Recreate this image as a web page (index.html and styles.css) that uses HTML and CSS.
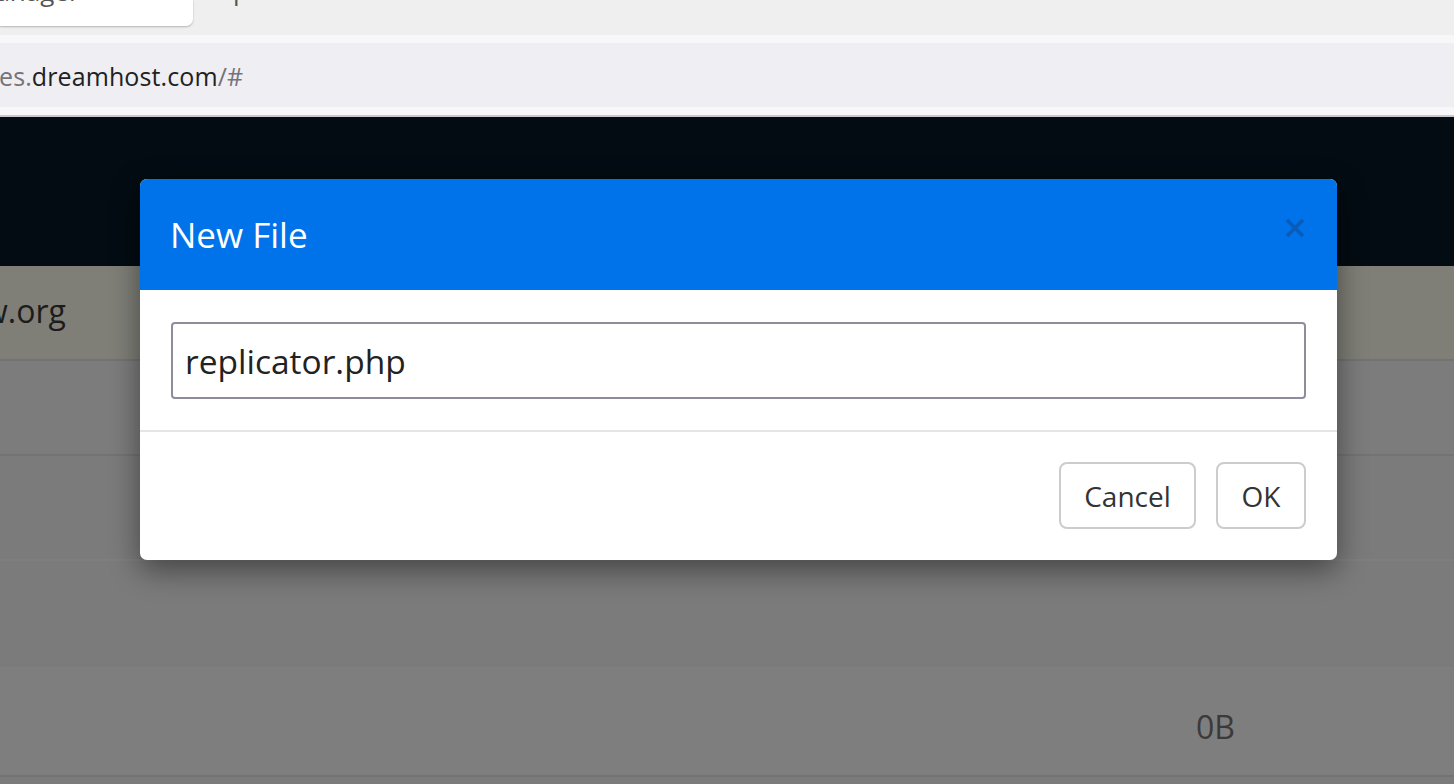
FILE: index.html
```html
<!DOCTYPE html>
<html>
<head>
<meta charset="utf-8">
<link rel="stylesheet" href="styles.css">
</head>
<body>
<div class="chrome">
  <div class="tabstrip">
    <div class="tab"><span class="tab-title">Manager</span></div>
    <span class="tab-next">p</span>
  </div>
  <div class="strip"></div>
  <div class="addressbar"><span class="url"><span class="dim">es.</span>dreamhost.com<span class="dim">/#</span></span></div>
  <div class="strip strip-bottom"></div>
</div>
<div class="app">
  <div class="topbar"></div>
  <div class="rows">
    <div class="row row-domain"><span class="domain">w.org</span></div>
    <div class="row row-a"></div>
    <div class="row row-b"></div>
    <div class="row row-c"></div>
    <div class="row row-d"><span class="size">0B</span></div>
    <div class="row row-e"></div>
  </div>
  <div class="modal">
    <div class="modal-header">
      <h4 class="modal-title">New File</h4>
      <button class="close" aria-label="Close">
        <svg width="20" height="20" viewBox="0 0 20 20"><path d="M2 2 L18 18 M18 2 L2 18" stroke="#0a5cb8" stroke-width="3.6" fill="none"/></svg>
      </button>
    </div>
    <div class="modal-body">
      <input class="filename" type="text" value="replicator.php">
    </div>
    <div class="modal-footer">
      <button class="btn btn-cancel">Cancel</button>
      <button class="btn btn-ok">OK</button>
    </div>
  </div>
</div>
</body>
</html>
```

FILE: styles.css
```css
* { box-sizing: border-box; }
html, body { margin: 0; padding: 0; overflow: hidden; }
body {
  width: 1454px;
  height: 784px;
  font-family: "Open Sans", "Liberation Sans", sans-serif;
  background: #7b7b7b;
}

.tabstrip {
  height: 35px;
  background: #efefef;
  display: flex;
  align-items: flex-start;
  overflow: hidden;
  position: relative;
}
.tab {
  width: 193px;
  height: 26px;
  background: #fff;
  border-bottom-right-radius: 7px;
  box-shadow: 0 1px 2px rgba(0,0,0,0.25);
  overflow: hidden;
  position: relative;
}
.tab-title {
  display: block;
  margin-top: -24px;
  margin-left: -28px;
  font-size: 26px;
  line-height: 30px;
  color: #555;
}
.tab-next {
  margin-left: 40px;
  margin-top: -24px;
  font-size: 26px;
  line-height: 28px;
  color: #555;
}
.strip {
  height: 8px;
  background: #f7f7f9;
}
.strip-bottom {
  border-bottom: 2px solid #c9c9c9;
  height: 10px;
}
.addressbar {
  height: 64px;
  background: #efeef3;
  display: flex;
  align-items: center;
}
.url {
  font-size: 25px;
  color: #202124;
  margin-left: -1px;
  margin-top: 2px;
  letter-spacing: 0.1px;
}
.url .dim { color: #74737a; }

.app {
  position: relative;
  height: 667px;
  overflow: hidden;
}
.topbar {
  height: 149px;
  background: #030c12;
}
.rows { display: flex; flex-direction: column; }
.row {
  border-bottom: 2px solid #737373;
  display: flex;
  align-items: center;
  position: relative;
  flex: none;
}
.row-domain {
  height: 95px;
  background: #7f7f78;
}
.domain {
  font-size: 32px;
  color: #1c1c1c;
  margin-left: -17px;
  margin-top: -4px;
}
.row-a { height: 95px; background: #7c7c7c; }
.row-b { height: 105px; background: #7b7b7b; border-bottom-color: #7f7f7f; }
.row-c { height: 108px; background: #7b7b7b; border-bottom-color: #7f7f7f; }
.row-d { height: 108px; background: #7e7e7e; }
.row-e { height: 8px; background: #7b7b7b; border-bottom: 0; }
.size {
  position: absolute;
  left: 1196px;
  top: 36px;
  font-size: 32px;
  color: #3a3a3a;
}

.modal {
  position: absolute;
  left: 140px;
  top: 62px;
  width: 1197px;
  background: #fff;
  border-radius: 7px;
  overflow: hidden;
  box-shadow: 0 10px 30px rgba(0,0,0,0.45);
}
.modal-header {
  height: 111px;
  background: #0073ea;
  display: flex;
  align-items: center;
  justify-content: space-between;
  padding: 0 32px 0 30px;
}
.modal-title {
  margin: 0;
  font-size: 35px;
  font-weight: 400;
  color: #fff;
  line-height: 50px;
  margin-top: 0;
}
.close {
  border: 0;
  background: none;
  padding: 0;
  margin-top: -14px;
  width: 20px;
  height: 20px;
  display: flex;
}
.modal-body {
  padding: 32px 31px 31px 31px;
}
.filename {
  display: block;
  width: 100%;
  height: 77px;
  border: 2px solid #8f8d9b;
  border-radius: 4px;
  padding: 0 12px;
  font-family: "Open Sans", "Liberation Sans", sans-serif;
  font-size: 33.5px;
  color: #222;
  background: #fff;
  outline: none;
}
.modal-footer {
  border-top: 2px solid #e5e5e5;
  padding: 30px 31px 31px 31px;
  display: flex;
  justify-content: flex-end;
  gap: 20px;
}
.btn {
  height: 67px;
  border: 2px solid #cccccc;
  border-radius: 8px;
  background: #fff;
  font-family: "Open Sans", "Liberation Sans", sans-serif;
  font-size: 28px;
  color: #333;
  padding: 0;
}
.btn-cancel { width: 137px; }
.btn-ok { width: 90px; }
```
